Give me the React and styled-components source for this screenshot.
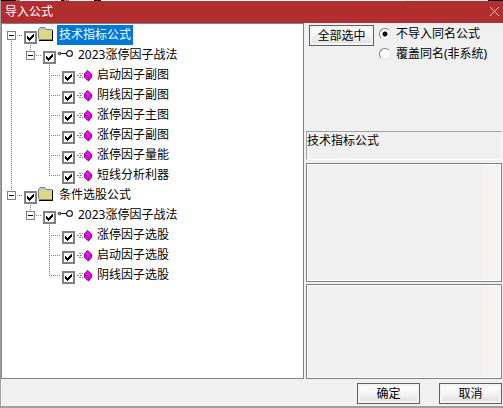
import React, { useState } from "react";
import styled, { createGlobalStyle, css } from "styled-components";

const GlobalStyle = createGlobalStyle`
  * {
    box-sizing: border-box;
  }

  body {
    margin: 0;
    background: #f0f0f0;
    color: #000;
    font-family: "Noto Sans", "Noto Sans CJK SC", sans-serif;
    font-size: 12px;
    line-height: 20px;
  }

  button, input {
    font: inherit;
    margin: 0;
  }
`;

const dotsDown = "repeating-linear-gradient(to bottom, #808080 0 1px, transparent 1px 2px)";
const dotsAcross = "repeating-linear-gradient(to right, #808080 0 1px, transparent 1px 2px)";

const Window = styled.div`
  display: flex;
  flex-direction: column;
  height: 100vh;
  border-left: 1px solid #a0a0a0;
  border-bottom: 2px solid #a0a0a0;
`;

const Backdrop = styled.div`
  height: 1px;
  background: linear-gradient(
    to right,
    #000 0 15px,
    #808080 15px 19px,
    #fff 19px 60px,
    #000 60px 63px,
    #808080 63px 68px,
    #fff 68px 93px,
    #000 93px 100px,
    #fff 100px 404px,
    #f0f0f0 404px 487px,
    #000 487px
  );
`;

const TitleBar = styled.header`
  display: flex;
  justify-content: space-between;
  align-items: center;
  height: 22px;
  padding: 0 3px 0 4px;
  background: #b22d30;
  color: #fff;
`;

const Title = styled.h1`
  margin: 0;
  font-size: 12px;
  font-weight: 400;
`;

const CloseButton = styled.button`
  display: flex;
  padding: 0 0 2px;
  border: none;
  background: none;
`;

const Content = styled.main`
  display: grid;
  grid-template-columns: 303px 1fr;
  flex: 1;
  min-height: 0;
`;

const Tree = styled.ul`
  margin: 0;
  padding: 1px 0 0;
  list-style: none;
  background: #fff;
  border: 1px solid #828282;
`;

const TreeRow = styled.li`
  display: flex;
  height: 20px;
`;

const Guide = styled.span`
  display: flex;
  flex: none;
  width: ${({ $last }) => ($last ? 22 : 19)}px;
  padding: 6px 0 0 5px;
  background-image: ${dotsDown}, ${dotsDown}, ${dotsAcross};
  background-repeat: no-repeat;
  background-position: 9px 0, 9px 10px, 9px 10px;
  background-size:
    ${({ $up }) => ($up ? "1px 10px" : "0 0")},
    ${({ $down }) => ($down ? "1px 10px" : "0 0")},
    ${({ $last }) => ($last ? "11px 1px" : "0 0")};
`;

const Expander = styled.button`
  width: 9px;
  height: 9px;
  padding: 0;
  border: 1px solid #808080;
  background: linear-gradient(#000, #000) center / 5px 1px no-repeat #fff;
`;

const CheckFrame = styled.span`
  display: grid;
  flex: none;
  place-items: center;
  width: 13px;
  height: 13px;
  margin-top: 6px;

  > * {
    grid-area: 1 / 1;
  }

  svg {
    pointer-events: none;
  }
`;

const CheckInput = styled.input`
  appearance: none;
  width: 13px;
  height: 13px;
  border: 2px solid #808080;
  background: #fff;

  &:not(:checked) + svg {
    visibility: hidden;
  }
`;

const NodeIcon = styled.svg`
  flex: none;
  width: 18px;
  height: 16px;
  margin: 2px 2px 0 0;
`;

const NodeLabel = styled.label`
  padding: 0 2px;
  white-space: nowrap;
  ${({ $selected }) =>
    $selected &&
    css`
      background: #0078d7;
      color: #fff;
    `}
`;

const Side = styled.section`
  display: flex;
  flex-direction: column;
  padding: 2px 1px 0 2px;
`;

const Options = styled.div`
  display: flex;
  align-items: flex-start;
  height: 106px;
  padding-left: 3px;
  gap: 5px;
`;

const Button = styled.button`
  width: ${({ $wide }) => ($wide ? 65 : 63)}px;
  height: 21px;
  padding: 0;
  border: 1px solid #606060;
  background: linear-gradient(#fff, #f4f4f4 50%, #dcdcdc);
  box-shadow: inset 0 0 0 2px #f4f4f4;
  color: #000;
  line-height: 18px;
`;

const RadioGroup = styled.div`
  display: grid;
  grid-auto-rows: 20px;
  margin-top: -1px;
`;

const RadioLabel = styled.label`
  display: flex;
  align-items: center;
  gap: 5px;
  white-space: nowrap;
`;

const Radio = styled.input`
  appearance: none;
  width: 12px;
  height: 12px;
  border: 1px solid;
  border-color: #808080 #e3e3e3 #e3e3e3 #808080;
  border-radius: 50%;
  background: #fff;

  &:checked {
    background: radial-gradient(circle, #000 0 2px, #fff 3px);
  }
`;

const Description = styled.p`
  height: 29px;
  margin: 0 0 3px;
  padding-right: 2px;
  border: 1px solid;
  border-color: #a0a0a0 #fff #fff #a0a0a0;
  line-height: 18px;
`;

const Pane = styled.div`
  flex: ${({ $grow }) => $grow};
  margin-bottom: ${({ $gap }) => $gap || 0}px;
  border: 1px solid #828282;
  background: linear-gradient(#f4f3f1, #f4f3f1) right / 18px 100% no-repeat #f0f0f0;
  box-shadow: inset 0 0 0 1px #fff;
`;

const Footer = styled.footer`
  display: flex;
  justify-content: flex-end;
  gap: 19px;
  padding: 4px 1px 2px;
`;

function FolderIcon() {
  return (
    <NodeIcon viewBox="0 0 18 16" shapeRendering="crispEdges" aria-hidden="true">
      <path d="M2 13V2h1V1h5v1h1v1h6v10z" fill="#c8c8c8" />
      {[3, 4, 5, 6, 7, 8, 9, 10, 11, 12].map((y) => (
        <path key={y} d={`M${2 + (y % 2)} ${y + 0.5}H15`} stroke="#e8e84c" strokeDasharray="1 1" />
      ))}
      <path d="M1 12V2h1V1h1V0h5v1h1v1h6v1H9V2H8V1H3v1H2v10h13v1H2v-1z" fill="#808080" />
      <path d="M15 3h1v11H2v-1h13z" fill="#000" />
    </NodeIcon>
  );
}

function LinkIcon() {
  return (
    <NodeIcon viewBox="0 0 18 16" aria-hidden="true">
      <path d="M4 6.5h7" stroke="#000" />
      <circle cx="3.5" cy="6.5" r="1.3" fill="#aaa" stroke="#222" />
      <circle cx="13.5" cy="6.5" r="2.9" fill="#fff" stroke="#222" strokeWidth="1.2" />
    </NodeIcon>
  );
}

function FormulaIcon() {
  return (
    <NodeIcon viewBox="0 0 18 16" aria-hidden="true">
      <path d="M4 6.5h4M2 8.5h5M4 10.5h4" stroke="#808080" strokeDasharray="2 1" />
      <path d="M12.5 3.5l4 3.5v3.500l-3 3.500-4-3.500V7z" fill="#f0f" />
      <path d="M12.5 3.5l4 3.5v3.500l-3 3.500-4-3.500V7z" fill="none" stroke="#400040" strokeWidth="0.8" />
      <path d="M9.5 7.5l4 3 3-3M13.5 10.5v3" fill="none" stroke="#800080" strokeWidth="0.6" />
    </NodeIcon>
  );
}

function Tick() {
  return (
    <svg width="7" height="7" viewBox="0 0 7 7" shapeRendering="crispEdges" aria-hidden="true">
      <path d="M0 2h1v1h1v1h1V3h1V2h1V1h1V0h1v3H6v1H5v1H4v1H3v1H2V6H1V5H0z" />
    </svg>
  );
}

const icons = [FolderIcon, LinkIcon, FormulaIcon];

const nodes = [
  { level: 0, name: "技术指标公式" },
  { level: 1, name: "2023涨停因子战法" },
  { level: 2, name: "启动因子副图" },
  { level: 2, name: "阴线因子副图" },
  { level: 2, name: "涨停因子主图" },
  { level: 2, name: "涨停因子副图" },
  { level: 2, name: "涨停因子量能" },
  { level: 2, name: "短线分析利器" },
  { level: 0, name: "条件选股公式" },
  { level: 1, name: "2023涨停因子战法" },
  { level: 2, name: "涨停因子选股" },
  { level: 2, name: "启动因子选股" },
  { level: 2, name: "阴线因子选股" },
];

// true when another node of this level follows under the same parent
function hasNext(index, level) {
  const next = nodes.slice(index + 1).find((node) => node.level <= level);
  return Boolean(next) && next.level === level;
}

function TreeNode({ node, index, selected }) {
  const Icon = icons[node.level];
  const id = `node-${index}`;

  return (
    <TreeRow>
      {Array.from({ length: node.level + 1 }, (_, level) => {
        const last = level === node.level;
        const next = hasNext(index, level);
        return (
          <Guide key={level} $last={last} $up={last ? index > 0 : next} $down={next}>
            {last && level < 2 && <Expander type="button" aria-label="折叠" />}
          </Guide>
        );
      })}
      <CheckFrame>
        <CheckInput type="checkbox" id={id} defaultChecked />
        <Tick />
      </CheckFrame>
      <Icon />
      <NodeLabel htmlFor={id} $selected={selected}>{node.name}</NodeLabel>
    </TreeRow>
  );
}

function App() {
  const [mode, setMode] = useState("skip");

  return (
    <>
      <GlobalStyle />
      <Window>
        <Backdrop />
        <TitleBar>
          <Title>导入公式</Title>
          <CloseButton type="button" aria-label="关闭">
            <svg width="11" height="11" viewBox="0 0 11 11" stroke="#e8c4c5">
              <path d="M1 1l9 9M10 1l-9 9" />
            </svg>
          </CloseButton>
        </TitleBar>
        <Content>
          <Tree>
            {nodes.map((node, index) => (
              <TreeNode key={index} node={node} index={index} selected={index === 0} />
            ))}
          </Tree>
          <Side>
            <Options>
              <Button type="button" $wide>全部选中</Button>
              <RadioGroup>
                <RadioLabel>
                  <Radio type="radio" name="mode" checked={mode === "skip"} onChange={() => setMode("skip")} />
                  不导入同名公式
                </RadioLabel>
                <RadioLabel>
                  <Radio type="radio" name="mode" checked={mode === "cover"} onChange={() => setMode("cover")} />
                  覆盖同名(非系统)
                </RadioLabel>
              </RadioGroup>
            </Options>
            <Description>技术指标公式</Description>
            <Pane $grow={5} $gap={2} />
            <Pane $grow={4} />
          </Side>
        </Content>
        <Footer>
          <Button type="button">确定</Button>
          <Button type="button">取消</Button>
        </Footer>
      </Window>
    </>
  );
}

export default App;
